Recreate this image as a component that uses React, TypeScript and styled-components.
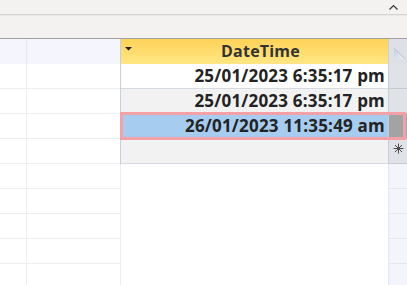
import styled, { createGlobalStyle, css } from 'styled-components'

const GlobalStyle = createGlobalStyle`
  html, body {
    margin: 0;
    padding: 0;
    background: #ffffff;
  }
  body {
    font-family: 'Open Sans', 'Segoe UI', sans-serif;
    overflow: hidden;
  }
`

type Kind = 'header' | 'odd' | 'even' | 'selected' | 'new' | 'empty'

type RecordRow = {
  id: string
  kind: Kind
  value?: string
}

const rows: RecordRow[] = [
  { id: 'h', kind: 'header' },
  { id: 'r1', kind: 'odd', value: '25/01/2023 6:35:17 pm' },
  { id: 'r2', kind: 'even', value: '25/01/2023 6:35:17 pm' },
  { id: 'r3', kind: 'selected', value: '26/01/2023 11:35:49 am' },
  { id: 'r4', kind: 'new' },
  { id: 'e1', kind: 'empty' },
  { id: 'e2', kind: 'empty' },
  { id: 'e3', kind: 'empty' },
  { id: 'e4', kind: 'empty' },
  { id: 'e5', kind: 'empty' },
]

const Page = styled.div`
  width: 407px;
  height: 285px;
  overflow: hidden;
  display: flex;
  flex-direction: column;
  background: #ffffff;
`

const TitleStrip = styled.div`
  flex-shrink: 0;
  height: 14px;
  background: #f3f2f1;
  border-bottom: 1px solid #d4d4d4;
  display: flex;
  justify-content: flex-end;
  align-items: center;
  padding-right: 9px;
`

const RibbonBand = styled.div`
  flex-shrink: 0;
  height: 23px;
  background: #f3f2f0;
  border-bottom: 1px solid #a0a0a0;
  box-shadow: inset 0 1px 0 #e9e8e6;
`

const Sheet = styled.div`
  flex-shrink: 0;
  display: flex;
  flex-direction: column;
`

const Row = styled.div`
  display: grid;
  grid-template-columns: 27px 93px 287px;
  height: 25px;
`

const GridCell = styled.div<{ $header: boolean; $last?: boolean }>`
  box-sizing: border-box;
  background: ${(p) => (p.$header ? '#f5f6fd' : '#ffffff')};
  border-right: ${(p) => (p.$last ? 'none' : p.$header ? '1px solid #e9eaf2' : '1px solid #eeeeee')};
  border-bottom: ${(p) => (p.$header ? 'none' : '1px solid #eeeeee')};
`

const RecordPart = styled.div<{ $kind: Kind }>`
  display: flex;
  box-sizing: border-box;
  border-left: 1px solid ${(p) => (p.$kind === 'empty' ? '#eeeeee' : '#c7d0df')};
  ${(p) =>
    p.$kind === 'selected' &&
    css`
      position: relative;
      &::after {
        content: '';
        position: absolute;
        left: -1px;
        top: -2px;
        right: 1px;
        bottom: -1px;
        border: 3px solid #f3a1a7;
        z-index: 1;
        pointer-events: none;
      }
    `}
`

const dateBg: Record<Kind, string> = {
  header: 'linear-gradient(#ffd257, #ffe784)',
  odd: '#ffffff',
  even: '#f2f2f2',
  selected: '#a6cdf0',
  new: '#f2f2f2',
  empty: '#ffffff',
}

const DateCell = styled.div<{ $kind: Kind }>`
  box-sizing: border-box;
  width: 268px;
  display: flex;
  align-items: center;
  background: ${(p) => dateBg[p.$kind]};
  border-right: 1px solid ${(p) => (p.$kind === 'empty' ? '#e4e6ec' : '#c9ced6')};
  border-bottom: ${(p) =>
    p.$kind === 'header' || p.$kind === 'empty' ? 'none' : '1px solid #d6dbe3'};
  justify-content: flex-end;
  padding-right: 3px;
  color: #232323;
  font-size: 17px;
  font-weight: 700;
  letter-spacing: 0.2px;
  line-height: 24px;
  white-space: nowrap;
`

const HeaderInner = styled.div`
  flex: 1;
  display: flex;
  align-items: center;
  padding-left: 4px;
  height: 100%;
`

const HeaderLabel = styled.span`
  flex: 1;
  text-align: center;
  font-size: 16px;
  font-weight: 700;
  letter-spacing: 0.2px;
  color: #333333;
  padding-bottom: 1px;
  padding-left: 4px;
`

const selectorBg: Record<Kind, string> = {
  header: '#dde1e7',
  odd: '#dfe2e6',
  even: '#dfe2e6',
  selected: '#a3a3a3',
  new: '#dfe2e6',
  empty: '#f4f5fc',
}

const Selector = styled.div<{ $kind: Kind }>`
  box-sizing: border-box;
  width: 18px;
  background: ${(p) => selectorBg[p.$kind]};
  border-bottom: ${(p) =>
    p.$kind === 'header'
      ? 'none'
      : p.$kind === 'empty'
        ? '1px solid #e6e7ef'
        : '1px solid #c6cbd3'};
  display: flex;
  justify-content: center;
  align-items: flex-start;
`

const ChevronUp = () => (
  <svg width="9" height="6" viewBox="0 0 9 6">
    <polyline points="0.5,5.5 4.5,1.5 8.5,5.5" fill="none" stroke="#3a3a3a" strokeWidth="1.2" />
  </svg>
)

const SortArrow = () => (
  <svg width="7" height="4" viewBox="0 0 7 4" style={{ marginTop: -6 }}>
    <polygon points="0,0 7,0 3.5,3.6" fill="#1f1f1f" />
  </svg>
)

const SelectAllCorner = () => (
  <svg width="18" height="25" viewBox="0 0 18 25">
    <defs>
      <linearGradient id="corner" x1="0" y1="0" x2="1" y2="1">
        <stop offset="0" stopColor="#c4cfdd" />
        <stop offset="1" stopColor="#edf0f4" />
      </linearGradient>
    </defs>
    <polygon points="5,9 16,20 5,20" fill="url(#corner)" />
    <line x1="5" y1="9" x2="16" y2="20" stroke="#b6c2d2" strokeWidth="1" />
  </svg>
)

const NewRecordMark = () => (
  <svg width="11" height="11" viewBox="0 0 11 11" style={{ marginTop: 4 }}>
    <g stroke="#4a4a4a" strokeWidth="1">
      <line x1="5.5" y1="0.5" x2="5.5" y2="10.5" />
      <line x1="0.5" y1="5.5" x2="10.5" y2="5.5" />
      <line x1="2" y1="2" x2="9" y2="9" />
      <line x1="9" y1="2" x2="2" y2="9" />
    </g>
  </svg>
)

const App = () => {
  return (
    <Page>
      <GlobalStyle />
      <TitleStrip>
        <ChevronUp />
      </TitleStrip>
      <RibbonBand />
      <Sheet>
        {rows.map((row) => {
          const isHeader = row.kind === 'header'
          return (
            <Row key={row.id}>
              <GridCell $header={isHeader} />
              <GridCell $header={isHeader} $last />
              <RecordPart $kind={row.kind}>
                <DateCell $kind={row.kind}>
                  {isHeader ? (
                    <HeaderInner>
                      <SortArrow />
                      <HeaderLabel>DateTime</HeaderLabel>
                    </HeaderInner>
                  ) : (
                    row.value
                  )}
                </DateCell>
                <Selector $kind={row.kind}>
                  {isHeader && <SelectAllCorner />}
                  {row.kind === 'new' && <NewRecordMark />}
                </Selector>
              </RecordPart>
            </Row>
          )
        })}
      </Sheet>
    </Page>
  )
}

export default App
